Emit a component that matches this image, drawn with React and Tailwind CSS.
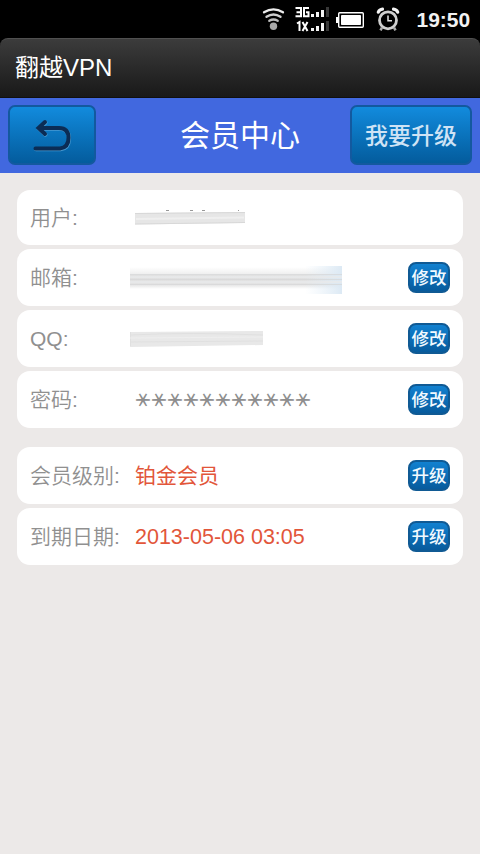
const FONT = "font-['Liberation_Sans','Noto_Sans_CJK_SC',sans-serif]";

function StatusBar() {
  return (
    <div className="flex h-[38px] shrink-0 items-center bg-black">
      <svg className="h-[38px] w-[165px] ml-[250px] shrink-0" viewBox="250 0 165 38" fill="none">
        <g strokeWidth="2.3" strokeLinecap="round">
          <path d="M264 12.3Q273.5 6.300 283 12.300" stroke="#ececec" />
          <path d="M266.500 16.800Q273.500 12.200 280.500 16.800" stroke="#cfcfcf" />
          <path d="M269.300 20.800Q273.500 18.200 277.700 20.800" stroke="#bdbdbd" />
        </g>
        <circle cx="273.500" cy="26.300" r="3.700" fill="#a9a9a9" />
        <g stroke="#fff" strokeWidth="2">
          <path d="M295.500 8H301V16.300H295.500M296.500 12.200H301" />
          <path d="M309 8H304V16.300H308.500V12.300H306" />
          <path d="M297 23.500L299.500 22V31M302.500 22L307.500 31M307.500 22L302.500 31" />
        </g>
        <g fill="#f4f4f4">
          <rect x="311" y="14" width="3" height="3" />
          <rect x="316" y="12" width="3" height="5" />
          <rect x="321" y="10" width="3" height="7" />
          <rect x="326" y="7" width="3" height="10" fill="#383838" />
          <rect x="311" y="28" width="3" height="3" />
          <rect x="316" y="26" width="3" height="5" />
          <rect x="321" y="23" width="3" height="8" />
          <rect x="326" y="21" width="3" height="10" fill="#383838" />
        </g>
        <rect x="338.700" y="12.700" width="24.600" height="14.600" rx="1" stroke="#fff" strokeWidth="1.400" />
        <rect x="341" y="15" width="20" height="10" rx=".8" fill="#fff" />
        <rect x="336" y="17" width="2.400" height="6" fill="#fff" />
        <circle cx="388" cy="20.300" r="8.500" stroke="#cfcfcf" strokeWidth="2.800" />
        <path d="M388 15.500V20.800H392" stroke="#e4e4e4" strokeWidth="1.500" />
        <path d="M378.300 12.200Q379.500 9.500 382.500 9.200M397.700 12.200Q396.500 9.500 393.500 9.200" stroke="#f4f4f4" strokeWidth="3.200" strokeLinecap="round" />
        <path d="M382 27.500L380.500 30.300M394 27.500L395.500 30.300" stroke="#aaa" strokeWidth="2.600" />
      </svg>
      <span className="ml-[1.5px] whitespace-nowrap text-[21px] font-bold leading-none text-[#f2f2f2]">19:50</span>
    </div>
  );
}

function Row({ label, action, short, children }) {
  return (
    <div className={`${short ? "h-[55px]" : "h-[57px]"} flex items-center rounded-[13px] bg-white pl-[13px] pr-[13px]`}>
      <span className="w-[100px] whitespace-nowrap text-[21px] font-[350] leading-none text-[#909090]">{label}</span>
      <div className="flex flex-1 items-center pl-[5px]">{children}</div>
      {action && (
        <button className="flex h-[31px] w-[42px] items-center justify-center whitespace-nowrap rounded-[8px] border-2 border-[#105a94] bg-linear-to-b from-[#1281d0] to-[#075b9d] pt-[2px] text-[17.5px] font-medium leading-none text-[#f2faff]">
          {action}
        </button>
      )}
    </div>
  );
}

function BackIcon() {
  return (
    <svg className="h-[36px] w-[42px]" viewBox="0 0 42 36" fill="none">
      <path d="M4.500 31.500H29Q37.500 30.500 37.500 21Q37.500 11 28 11H9M14 5L7.500 11L14 17" stroke="#4a9bd2" strokeWidth="4" strokeLinecap="round" transform="translate(.5 .7)" />
      <path d="M4.500 31.500H29Q37.500 30.500 37.500 21Q37.500 11 28 11H9M14 5L7.500 11L14 17" stroke="#0b2c55" strokeWidth="4" strokeLinecap="round" />
    </svg>
  );
}

export default function App() {
  return (
    <div className={`${FONT} flex h-[854px] w-[480px] flex-col overflow-hidden bg-[#ece9e8]`}>
      <StatusBar />
      <div className="h-[60px] shrink-0 bg-black">
        <div className="flex h-[60px] items-center rounded-t-[8px] border-t border-b border-t-[#505050] border-b-[#101010] bg-linear-to-b from-[#3c3c3c] to-[#191919] pl-[15px] text-[24px] leading-none text-white">
          翻越VPN
        </div>
      </div>
      <div className="flex h-[75px] shrink-0 items-center justify-between bg-[#4168df] px-2 pb-px">
        <button className="flex h-[60px] w-[88px] items-center justify-center rounded-[7px] border-2 border-[#13599f] bg-linear-to-b from-[#128bdd] to-[#045c9d]">
          <BackIcon />
        </button>
        <h1 className="ml-[84px] whitespace-nowrap pt-[2px] text-[30px] leading-none text-white">会员中心</h1>
        <button className="ml-auto flex h-[60px] w-[122px] items-center justify-center whitespace-nowrap rounded-[7px] border-2 border-[#13599f] bg-linear-to-b from-[#128bdd] to-[#045c9d] pt-[2px] text-[23px] font-medium leading-none text-[#cfe3f5]">
          我要升级
        </button>
      </div>
      <main className="flex flex-col gap-[19px] pl-[17px] pr-[17px] pt-[17px]">
        <section className="flex flex-col gap-1">
          <Row label="用户:" short>
            <svg className="mt-[4px] h-[20px] w-[110px]" viewBox="0 0 110 20">
              <path d="M0 3L110 2V13L0 14.500Z" fill="#e6e6e6" />
              <path d="M0 3.500L110 2.500M0 14L110 12.500" stroke="#d8d8d8" />
              <path d="M1 9L109 7.500" stroke="#efefef" strokeWidth="2" />
              <path d="M31 .5h3M55 .5h3M67 .5h3M103 .5h1" stroke="#999" strokeWidth="1" />
            </svg>
          </Row>
          <Row label="邮箱:" action="修改">
            <svg className="-ml-[5px] mt-[4px] h-[30px] w-[212px]" viewBox="0 0 212 30">
              <defs>
                <linearGradient id="fade" x1="0" x2="1">
                  <stop offset="0" stopColor="#e4eff8" stopOpacity="0" />
                  <stop offset="1" stopColor="#dce9f4" />
                </linearGradient>
                <linearGradient id="band" x1="0" x2="0" y1="0" y2="1">
                  <stop offset="0" stopColor="#fff" />
                  <stop offset=".3" stopColor="#f0f0f0" />
                  <stop offset=".4" stopColor="#dfdfdf" />
                  <stop offset=".8" stopColor="#e4e4e4" />
                  <stop offset="1" stopColor="#fff" />
                </linearGradient>
              </defs>
              <rect y="2" width="212" height="22" fill="url(#band)" />
              <rect x="175" y="1" width="37" height="28" fill="url(#fade)" />
              <path d="M0 9.500H212M0 14.500H212M0 19.500H212" stroke="#d6d7d8" strokeWidth="1" opacity=".7" />
              <path d="M0 12H212M0 17H212" stroke="#e9eaeb" strokeWidth="1.500" />
            </svg>
          </Row>
          <Row label="QQ:" action="修改">
            <svg className="-ml-[5px] h-[16px] w-[133px]" viewBox="0 0 133 16">
              <path d="M0 1L133 0V14L0 16Z" fill="#e8e8e8" />
              <path d="M0 4Q60 1 133 4M0 11L133 10M.5 1V15" stroke="#e0e0e0" fill="none" />
              <path d="M0 7L133 6" stroke="#eee" />
            </svg>
          </Row>
          <Row label="密码:" action="修改">
            <div className="flex h-[18px] w-[176px] items-center justify-center pr-[2px] pt-px">
              <span className="shrink-0 -rotate-90 whitespace-nowrap font-['Noto_Sans_CJK_SC',sans-serif] text-[18px] font-bold leading-none tracking-[-2px] text-[#8e8e8e] [text-orientation:upright] [writing-mode:vertical-rl]">
                ＊＊＊＊＊＊＊＊＊＊＊
              </span>
            </div>
          </Row>
        </section>
        <section className="flex flex-col gap-1">
          <Row label="会员级别:" action="升级">
            <span className="whitespace-nowrap text-[21px] leading-none text-[#e2563a]">铂金会员</span>
          </Row>
          <Row label="到期日期:" action="升级">
            <span className="whitespace-nowrap pt-[2px] text-[21.500px] leading-none text-[#e2563a]">2013-05-06 03:05</span>
          </Row>
        </section>
      </main>
    </div>
  );
}
